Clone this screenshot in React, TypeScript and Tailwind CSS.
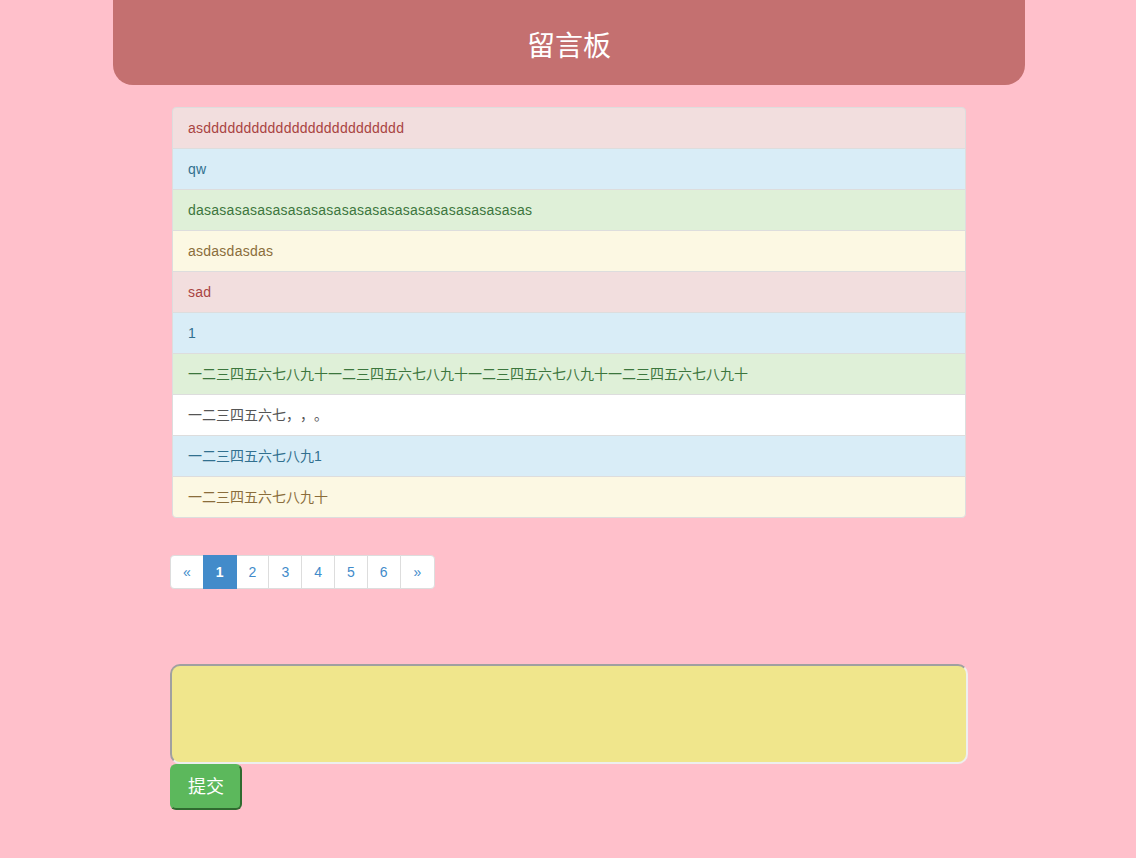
import React from "react";

type Kind = "danger" | "info" | "success" | "warning" | "plain";

const messages: { text: string; kind: Kind; cjk?: boolean }[] = [
  { text: "asddddddddddddddddddddddddd", kind: "danger" },
  { text: "qw", kind: "info" },
  { text: "dasasasasasasasasasasasasasasasasasasasasasas", kind: "success" },
  { text: "asdasdasdas", kind: "warning" },
  { text: "sad", kind: "danger" },
  { text: "1", kind: "info" },
  { text: "一二三四五六七八九十一二三四五六七八九十一二三四五六七八九十一二三四五六七八九十", kind: "success", cjk: true },
  { text: "一二三四五六七，，。", kind: "plain", cjk: true },
  { text: "一二三四五六七八九1", kind: "info", cjk: true },
  { text: "一二三四五六七八九十", kind: "warning", cjk: true },
];

const kindClass: Record<Kind, string> = {
  danger: "bg-[#f2dede] text-[#a94442]",
  info: "bg-[#d9edf7] text-[#31708f]",
  success: "bg-[#dff0d8] text-[#3c763d]",
  warning: "bg-[#fcf8e3] text-[#8a6d3b]",
  plain: "bg-white text-[#555555]",
};

const pages = ["«", "1", "2", "3", "4", "5", "6", "»"];

export default function App() {
  return (
    <div
      className="min-h-[858px] bg-[#ffc0cb] text-[14px] [text-spacing-trim:space-all]"
      style={{ fontFamily: '"Liberation Sans", "Noto Sans CJK SC", sans-serif' }}
    >
      <div className="ml-[113px] w-[912px]">
        {/* header */}
        <div className="h-[85px] rounded-b-[20px] bg-[#c47070] flex items-center justify-center">
          <h1 className="text-[28px] text-white leading-none pt-[9px]">留言板</h1>
        </div>

        <div className="pl-[57px]">
          {/* message list */}
          <ul className="mt-[22px] ml-[2px] w-[794px]">
            {messages.map((m, i) => (
              <li
                key={i}
                className={`px-[15px] py-[10px] leading-[20px] border border-[#dddddd] -mb-[1px] ${kindClass[m.kind]} ${
                  m.cjk ? "" : "tracking-[0.25px]"
                } ${i === 0 ? "rounded-t-[4px]" : ""} ${i === messages.length - 1 ? "rounded-b-[4px]" : ""}`}
              >
                {m.text}
              </li>
            ))}
          </ul>

          {/* pagination */}
          <div className="mt-[38px] flex">
            {pages.map((p, i) => {
              const active = p === "1";
              return (
                <span
                  key={i}
                  className={`py-[6px] leading-[20px] border ${i === pages.length - 1 ? "px-[13px]" : "px-[12px]"} ${
                    i > 0 ? "-ml-[1px]" : ""
                  } ${
                    active
                      ? "bg-[#428bca] border-[#428bca] text-white font-bold relative"
                      : "bg-white border-[#dddddd] text-[#428bca]"
                  } ${i === 0 ? "rounded-l-[4px]" : ""} ${i === pages.length - 1 ? "rounded-r-[4px]" : ""}`}
                >
                  {p}
                </span>
              );
            })}
          </div>

          {/* form */}
          <textarea
            className="block mt-[75px] w-[798px] h-[100px] rounded-[10px] bg-[#f0e68c] border-2 border-t-[#a0a0a0] border-l-[#a0a0a0] border-b-[#eeeeee] border-r-[#eeeeee] resize-none outline-none"
          />
          <button className="block w-[72px] h-[46px] rounded-[6px] bg-[#5cb85c] text-white text-[18px] border-2 border-t-[#5cb85c] border-l-[#5cb85c] border-b-[#2f6b2f] border-r-[#2f6b2f]">
            提交
          </button>
        </div>
      </div>
    </div>
  );
}
